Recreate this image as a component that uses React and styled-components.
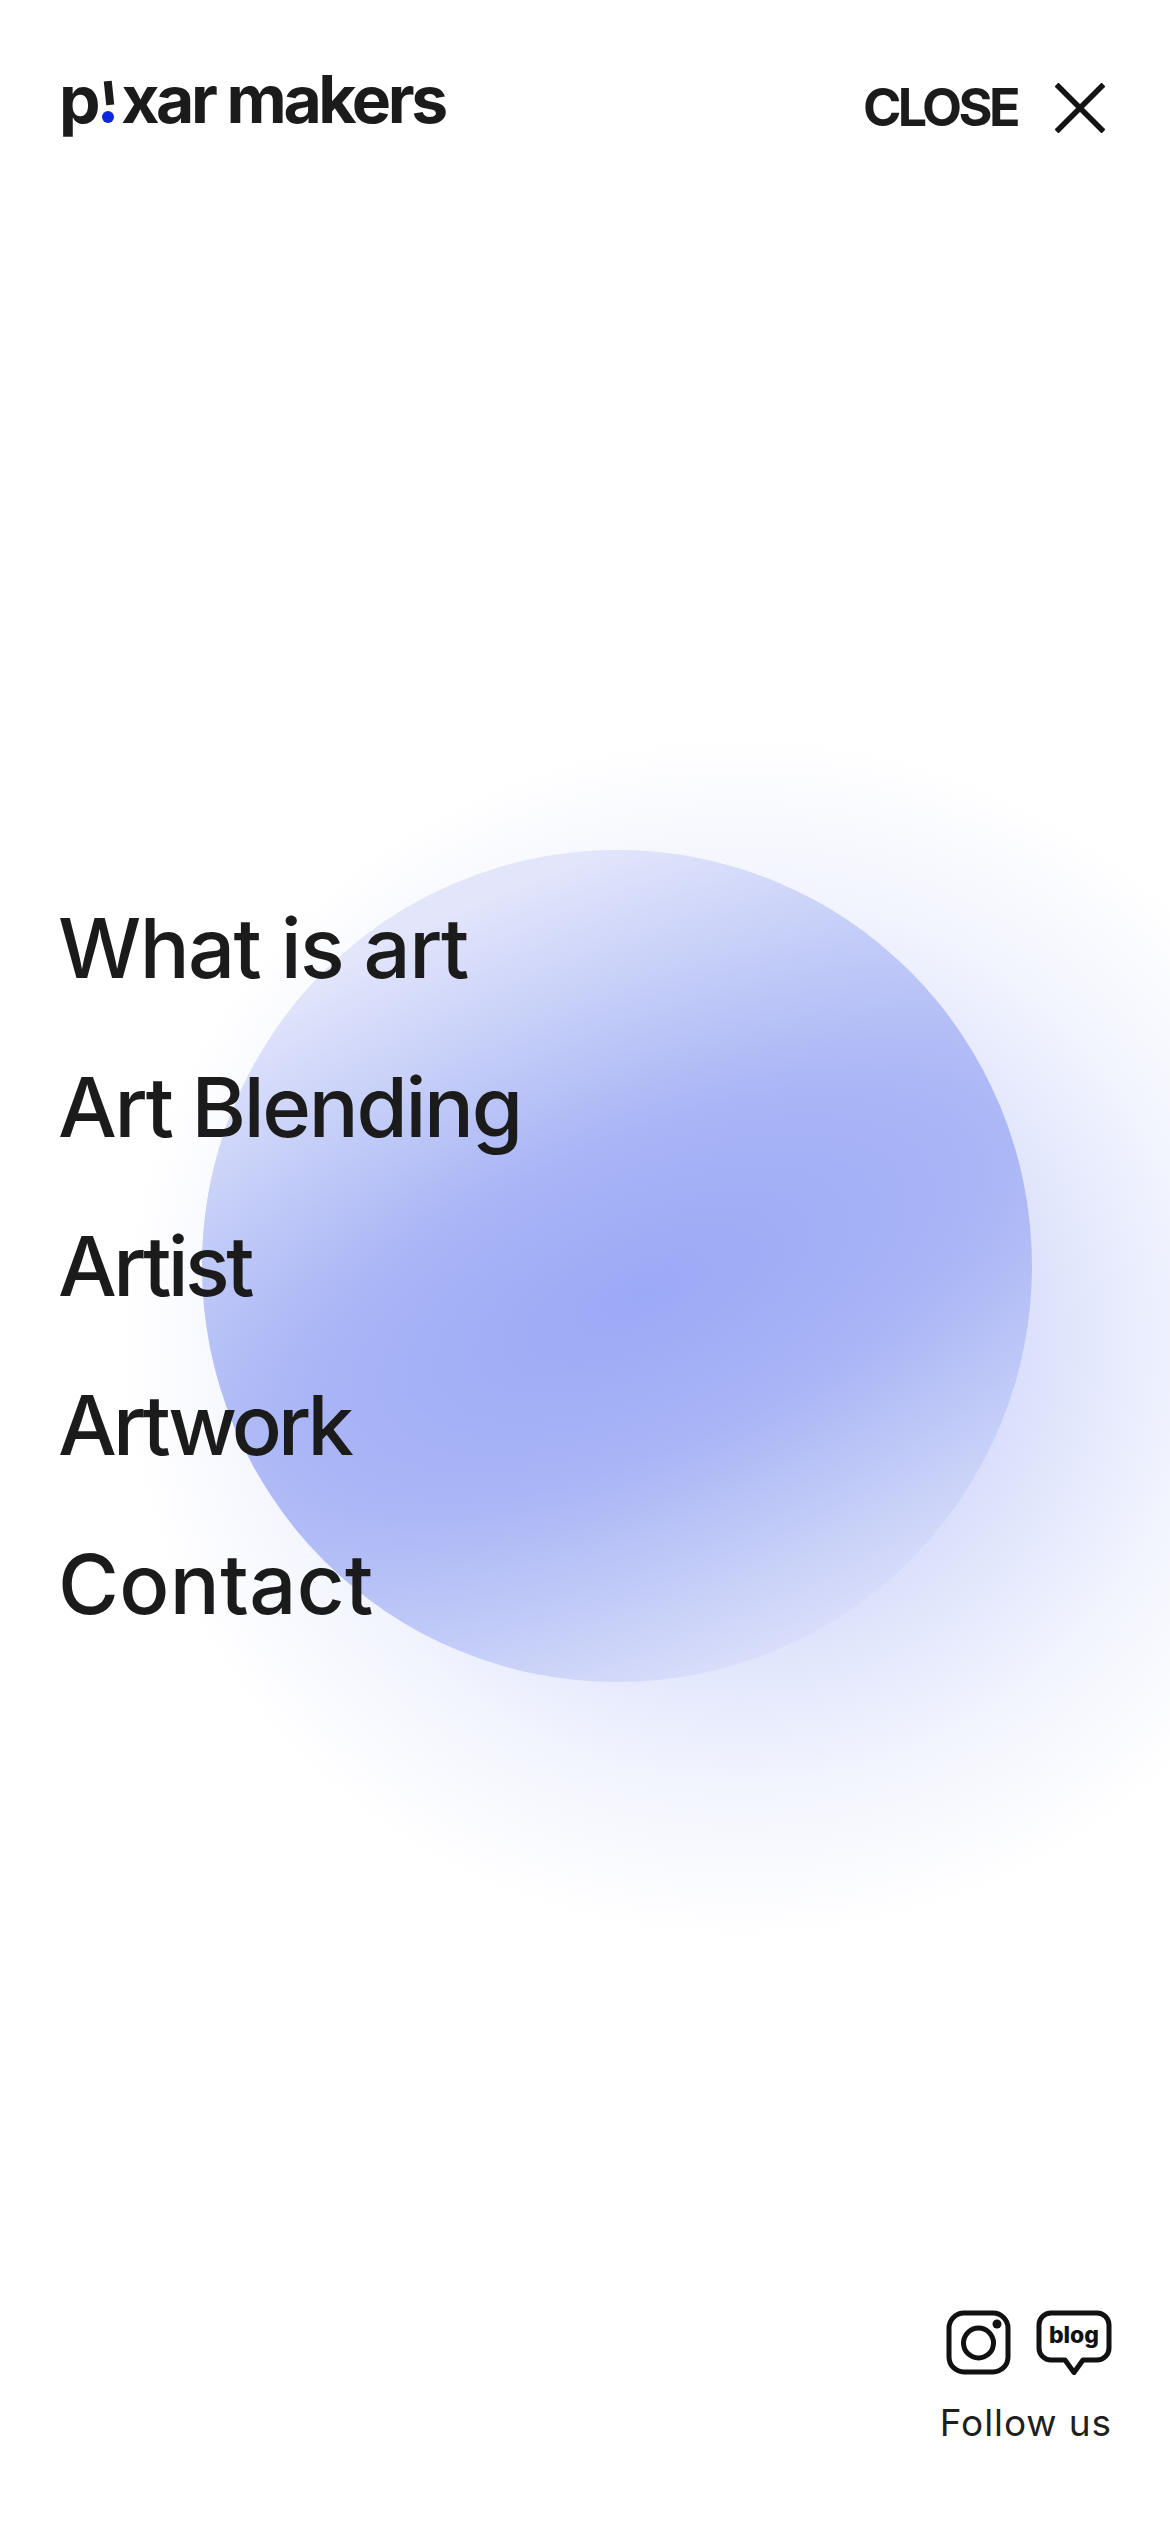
import React from 'react';
import styled, { createGlobalStyle } from 'styled-components';

const GlobalStyle = createGlobalStyle`
  html, body {
    margin: 0;
    padding: 0;
    background: #fff;
  }
`;

const Page = styled.div`
  position: relative;
  width: 1170px;
  height: 2532px;
  overflow: hidden;
  display: flex;
  flex-direction: column;
  background: #fff;
  color: #1b1b1b;
  font-family: Inter, "Liberation Sans", sans-serif;
`;

const Glow = styled.div`
  position: absolute;
  left: 120px;
  top: 735px;
  width: 1240px;
  height: 1205px;
  background: radial-gradient(closest-side, rgba(100, 125, 240, 0.34) 0%, rgba(100, 125, 240, 0.24) 45%, rgba(100, 125, 240, 0.08) 75%, rgba(100, 125, 240, 0) 100%);
`;

const Circle = styled.div`
  position: absolute;
  left: 202px;
  top: 850px;
  width: 830px;
  height: 832px;
  border-radius: 50%;
  overflow: hidden;
  background: #e3e6fb;

  &::before {
    content: "";
    position: absolute;
    left: -560px;
    top: 14px;
    width: 2000px;
    height: 860px;
    transform: rotate(-24deg);
    background: radial-gradient(closest-side, #9ca9f6 0%, #a9b5f6 36%, #c6cff8 68%, #e3e6fb 100%);
  }
`;

const Header = styled.header`
  position: relative;
  display: flex;
  justify-content: space-between;
  align-items: flex-start;
  padding: 66px 65px 0 59px;
`;

const Logo = styled.div`
  display: flex;
  align-items: baseline;
  font-size: 66px;
  line-height: 66px;
  font-weight: 700;
  letter-spacing: -3.4px;
`;

const LogoMark = styled.span`
  position: relative;
  display: inline-block;
  width: 21px;
  height: 36px;
  margin: 0 1px 0 2px;

  &::before {
    content: "";
    position: absolute;
    left: 6px;
    top: -6px;
    width: 8px;
    height: 24px;
    background: #1b1b1b;
    transform: rotate(-6deg);
  }

  &::after {
    content: "";
    position: absolute;
    left: 3px;
    top: 24px;
    width: 12px;
    height: 12px;
    border-radius: 50%;
    background: #0b27e0;
  }
`;

const CloseButton = styled.div`
  display: flex;
  align-items: center;
  gap: 38px;
  margin-top: 16px;
`;

const CloseLabel = styled.span`
  font-size: 52px;
  line-height: 52px;
  font-weight: 700;
  letter-spacing: -3.6px;
`;

const Menu = styled.nav`
  position: relative;
  display: flex;
  flex-direction: column;
  gap: 59px;
  margin-top: 764px;
  padding-left: 58px;
`;

const MenuItem = styled.a`
  font-size: 83px;
  line-height: 100px;
  font-weight: 500;
  letter-spacing: ${props => props.$tracking}px;
  color: #1b1b1b;
`;

const Footer = styled.footer`
  position: relative;
  margin-top: auto;
  display: flex;
  flex-direction: column;
  align-items: flex-end;
  padding: 0 58px 85px 0;
`;

const Icons = styled.div`
  display: flex;
  gap: 25px;
  margin-bottom: 24px;
`;

const FollowUs = styled.div`
  font-size: 37px;
  line-height: 48px;
  letter-spacing: 0.9px;
  color: #1f1f1f;
`;

const menu = [
  { label: 'What is art', tracking: -1.6 },
  { label: 'Art Blending', tracking: -2.3 },
  { label: 'Artist', tracking: -3.6 },
  { label: 'Artwork', tracking: -3.9 },
  { label: 'Contact', tracking: 0.4 },
];

const App = () => (
  <Page>
    <GlobalStyle />
    <Glow />
    <Circle />
    <Header>
      <Logo>
        p<LogoMark />xar makers
      </Logo>
      <CloseButton>
        <CloseLabel>CLOSE</CloseLabel>
        <svg width="50" height="50" viewBox="0 0 50 50">
          <path d="M1.5 1.5 L48.5 48.5 M48.5 1.5 L1.5 48.5" stroke="#141414" strokeWidth="5.5" fill="none" />
        </svg>
      </CloseButton>
    </Header>
    <Menu>
      {menu.map(x => (
        <MenuItem key={x.label} $tracking={x.tracking}>{x.label}</MenuItem>
      ))}
    </Menu>
    <Footer>
      <Icons>
        <svg width="65" height="65" viewBox="0 0 65 65" fill="none">
          <rect x="3" y="3" width="59" height="59" rx="15" stroke="#111" strokeWidth="5" />
          <circle cx="32.5" cy="33" r="15" stroke="#111" strokeWidth="5" />
          <circle cx="51" cy="14" r="4.5" fill="#111" />
        </svg>
        <svg width="76" height="65" viewBox="0 0 76 65" fill="none">
          <path
            d="M15 3 H61 A12 12 0 0 1 73 15 V38 A12 12 0 0 1 61 50 H47 L38 62.5 L29 50 H15 A12 12 0 0 1 3 38 V15 A12 12 0 0 1 15 3 Z"
            stroke="#111"
            strokeWidth="5"
            strokeLinejoin="round"
          />
          <text x="38" y="33" textAnchor="middle" fontFamily="Inter, sans-serif" fontSize="23" fontWeight="800" fill="#111">blog</text>
        </svg>
      </Icons>
      <FollowUs>Follow us</FollowUs>
    </Footer>
  </Page>
);

export default App;
